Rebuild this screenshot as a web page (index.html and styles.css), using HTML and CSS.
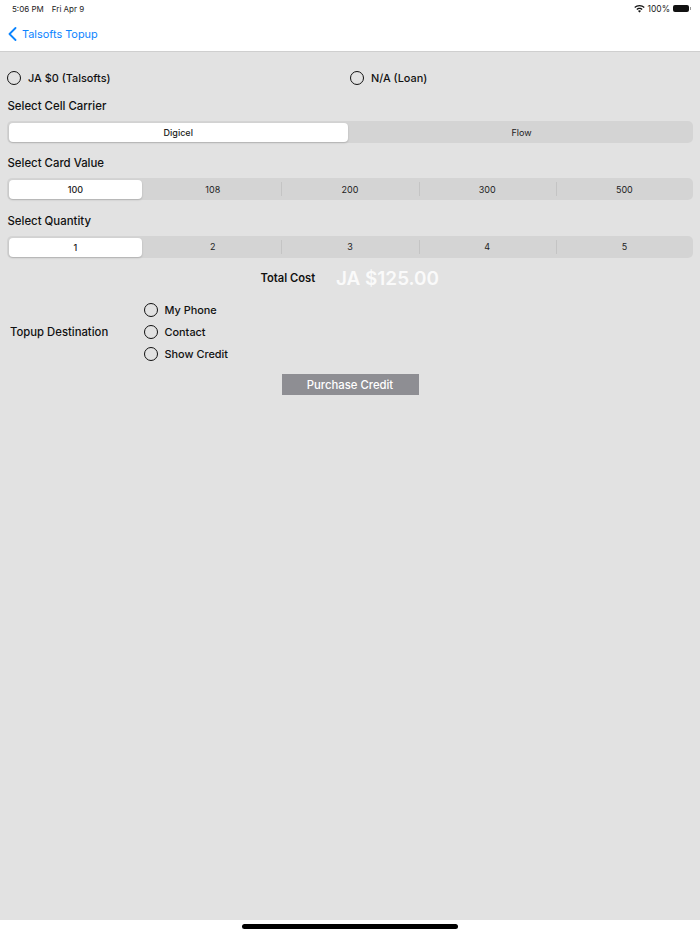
FILE: index.html
```html
<!DOCTYPE html>
<html lang="en">
<head>
<meta charset="utf-8">
<title>Talsofts Topup</title>
<link rel="stylesheet" href="styles.css">
</head>
<body>
<div class="screen">
  <header class="header">
    <div class="status">
      <div class="status-left"><span>5:06 PM</span><span>Fri Apr 9</span></div>
      <div class="status-right">
        <svg class="wifi" width="11" height="8" viewBox="0 0 11 8"><path d="M5.500 0C3.500 0 1.700.8.300 2l.9 1C2.300 2 3.800 1.300 5.500 1.300S8.700 2 9.800 3l.9-1C9.300.8 7.500 0 5.500 0zM5.500 2.700c-1.200 0-2.300.5-3.100 1.200l.9 1c.6-.5 1.400-.9 2.200-.9s1.600.4 2.200.9l.9-1c-.8-.7-1.900-1.200-3.100-1.200zM5.500 5.300c-.6 0-1.100.2-1.500.6L5.500 7.600 7 5.900c-.4-.4-.9-.6-1.500-.6z" fill="#111"/></svg>
        <span>100%</span>
        <span class="battery"></span>
      </div>
    </div>
    <nav class="nav">
      <svg width="9" height="14" viewBox="0 0 9 14"><path d="M7.500 1 1.500 7l6 6" fill="none" stroke="#0a84ff" stroke-width="1.800" stroke-linecap="round" stroke-linejoin="round"/></svg>
      <span>Talsofts Topup</span>
    </nav>
  </header>

  <main class="content">
    <div class="sources">
      <label class="radio"><span class="dot"></span>JA $0 (Talsofts)</label>
      <label class="radio"><span class="dot"></span>N/A (Loan)</label>
    </div>

    <h2 class="title">Select Cell Carrier</h2>
    <div class="seg two">
      <div class="opt on">Digicel</div>
      <div class="opt">Flow</div>
    </div>

    <h2 class="title">Select Card Value</h2>
    <div class="seg five">
      <div class="opt on">100</div>
      <div class="opt">108</div>
      <div class="opt line">200</div>
      <div class="opt line">300</div>
      <div class="opt line">500</div>
    </div>

    <h2 class="title">Select Quantity</h2>
    <div class="seg five">
      <div class="opt on">1</div>
      <div class="opt">2</div>
      <div class="opt line">3</div>
      <div class="opt line">4</div>
      <div class="opt line">5</div>
    </div>

    <div class="total">
      <span class="total-label">Total Cost</span>
      <span class="total-value">JA $125.00</span>
    </div>

    <div class="dest">
      <div class="dest-label">Topup Destination</div>
      <div class="dest-list">
        <label class="radio"><span class="dot"></span>My Phone</label>
        <label class="radio"><span class="dot"></span>Contact</label>
        <label class="radio"><span class="dot"></span>Show Credit</label>
      </div>
    </div>

    <div class="actions"><button class="buy">Purchase Credit</button></div>
  </main>

  <footer class="home"><span class="home-bar"></span></footer>
</div>
</body>
</html>
```

FILE: styles.css
```css
* { box-sizing: border-box; }
html, body { margin: 0; padding: 0; }
body { font-family: Inter, "Liberation Sans", sans-serif; color: #111; background: #fff; }
.screen { width: 700px; height: 934px; display: flex; flex-direction: column; overflow: hidden; }

.header { height: 52px; background: #fff; border-bottom: 1px solid #cfcfcf; flex: none; }
.status { height: 17px; display: flex; justify-content: space-between; align-items: center; padding: 0 10px 0 12px; font-size: 8px; color: #222; }
.status-left { display: flex; gap: 8px; }
.status-right { display: flex; align-items: center; gap: 2px; font-size: 8.500px; }
.battery { position: relative; width: 16px; height: 7px; background: #111; border-radius: 2px; margin-right: 1px; margin-left: 1px; }
.battery::after { content: ""; position: absolute; right: -2px; top: 2px; width: 1px; height: 3px; background: #999; }
.nav { height: 34px; display: flex; align-items: center; gap: 5px; padding-left: 8px; font-size: 10.900px; color: #0a84ff; }

.content { flex: 1; background: #e2e2e2; padding: 17px 7px 0; display: flex; flex-direction: column; }
.sources { display: grid; grid-template-columns: 343px 1fr; height: 18px; }
.radio { display: flex; align-items: center; gap: 6.500px; font-size: 10.900px; font-weight: 500; height: 22px; }
.sources .radio { height: 18px; gap: 7px; }
.dot { width: 14px; height: 14px; border: 1.500px solid #111; border-radius: 50%; flex: none; }

.title { margin: 11px 0 0; padding-left: .5px; font-size: 11.400px; font-weight: 500; line-height: 16px; height: 16px; }
.seg { margin-top: 7px; height: 22px; background: #d4d4d4; border-radius: 5px; display: grid; }
.seg.two { grid-template-columns: 1fr 1fr; }
.seg.five { grid-template-columns: repeat(5, 1fr); }
.seg + .title { margin-top: 12.250px; }
.opt { display: flex; align-items: center; justify-content: center; font-size: 9px; color: #222; position: relative; }
.opt.on { margin: 2px 2px 1px 1.500px; background: #fff; border-radius: 4px; box-shadow: 0 1px 2px rgba(0,0,0,.18); font-weight: 500; }
.opt.line::before { content: ""; position: absolute; left: 0; top: 4px; bottom: 4px; width: 1px; background: #c4c4c4; }

.total { display: flex; align-items: center; margin-top: 9.500px; height: 22px; padding-left: 253.500px; }
.total-label { font-size: 11.200px; font-weight: 600; width: 75.500px; }
.total-value { font-size: 18.900px; font-weight: 600; color: #fafafa; }

.dest { display: flex; align-items: center; margin-top: 10px; padding-left: 3px; }
.dest-label { width: 134px; font-size: 11.300px; font-weight: 500; }
.dest-list { display: flex; flex-direction: column; }
.actions { display: flex; justify-content: center; margin-top: 9px; }
.buy { width: 137px; height: 21px; border: 0; padding: 0; background: #8e8e93; color: #fff; font: 500 11.300px Inter, "Liberation Sans", sans-serif; }

.home { height: 14px; background: #fff; flex: none; display: flex; justify-content: center; padding-top: 4px; }
.home-bar { width: 216px; height: 5px; background: #000; border-radius: 3px; }
```
